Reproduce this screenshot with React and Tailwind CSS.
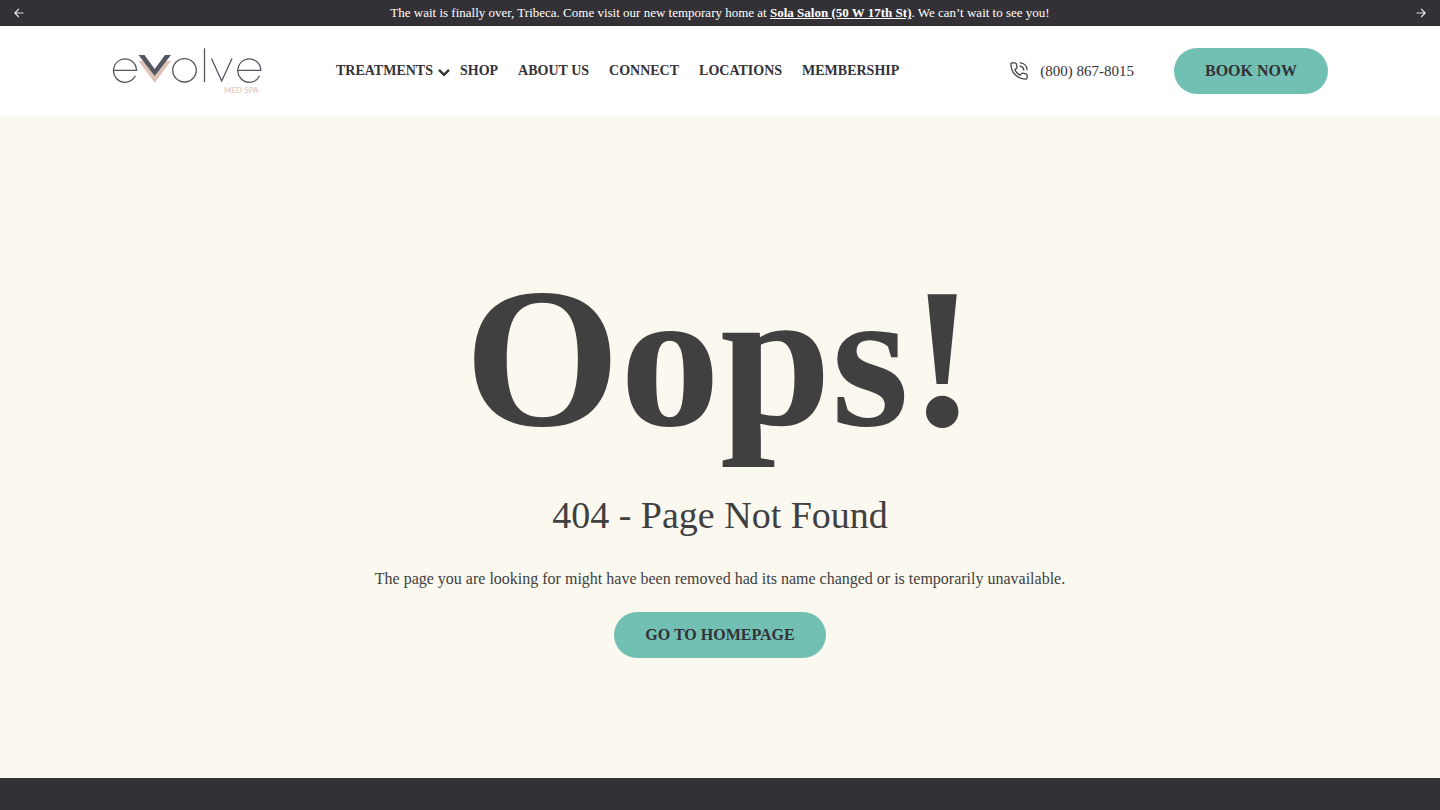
import React from 'react';

const navItems = ['Shop', 'About Us', 'Connect', 'Locations', 'Membership'];

const Logo = () => (
  <svg width="150" height="46" viewBox="0 0 150 46" fill="none" role="img" aria-label="Evolve Med Spa">
    <g stroke="#55575e" strokeWidth="1.3">
      <path d="M1.5 22.3H24.5A11.5 11.7 0 1 0 23.3 27.8" />
      <ellipse cx="72.5" cy="22.3" rx="11.8" ry="11.7" />
      <path d="M92.5 0.3V34.3" />
      <path d="M99.5 10.5L109.7 33L120 10.5" />
      <path d="M125.8 22.3H148.8A11.5 11.7 0 1 0 147.6 27.8" />
    </g>
    <path d="M26.5 13H32L42.5 27.5L53.5 13H59L42.7 34.8Z" fill="#dec2b6" />
    <path d="M26.5 7H32.5L42.7 21L53 7H59L42.7 28Z" fill="#545660" />
    <text x="112" y="45" fill="#dec2b6" fontSize="8" className="font-['Lato','Open_Sans',sans-serif]">
      MED SPA
    </text>
  </svg>
);

const PhoneIcon = () => (
  <svg width="18" height="18" viewBox="0 0 20 20" fill="none" stroke="#414042" strokeWidth="1.4" strokeLinecap="round" strokeLinejoin="round" aria-hidden="true">
    <path d="M2.2 1H5.2C6.4 1 6.9 1.4 7.1 2.2L7.8 5.6C7.9 6.3 7.7 6.8 7.2 7.2L5.4 8.6C6.6 11 8.6 13.2 11.2 14.6L12.8 12.9C13.3 12.4 13.8 12.2 14.5 12.4L17.8 13.1C18.7 13.3 19 13.8 19 14.8V17.6C19 18.6 18.5 19 17.6 19C8.4 19 1 11.6 1 2.4C1 1.5 1.4 1 2.2 1Z" />
    <path d="M11.5 1C15.6 1.3 18.7 4.4 19 8.5" />
    <path d="M11.2 4.7C13.4 5 15 6.6 15.3 8.8" />
  </svg>
);

const Arrow = ({ flip }) => (
  <svg width="10" height="10" viewBox="0 0 10 10" fill="none" stroke="#e4e4e4" strokeWidth="1.2" className={flip ? 'rotate-180' : ''} aria-hidden="true">
    <path d="M0.5 5H9M5.2 1L9.2 5L5.2 9" />
  </svg>
);

const PillLink = ({ children }) => (
  <a href="#" className="flex h-[46px] items-center rounded-full bg-[#71c0b3] px-[31px] text-base font-bold uppercase text-[#333136] hover:opacity-90">
    {children}
  </a>
);

const AnnouncementBar = () => (
  <div className="flex h-[26px] items-center justify-between bg-[#333136] px-[14px] text-[13px] text-white">
    <button type="button" aria-label="Previous announcement">
      <Arrow flip />
    </button>
    <p>
      The wait is finally over, Tribeca. Come visit our new temporary home at{' '}
      <a href="#" className="font-bold underline">Sola Salon (50 W 17th St)</a>. We can’t wait to see you!
    </p>
    <button type="button" aria-label="Next announcement">
      <Arrow />
    </button>
  </div>
);

const Header = () => (
  <header className="flex h-[90px] items-center bg-white px-28">
    <a href="#" className="shrink-0">
      <Logo />
    </a>
    <nav className="ml-[74px] flex items-center gap-5 whitespace-nowrap text-sm font-bold uppercase">
      <button type="button" className="-mr-[10px] flex items-center gap-1 font-bold uppercase">
        Treatments
        <svg width="13" height="9" viewBox="0 0 13 9" fill="none" stroke="currentColor" strokeWidth="2.4" className="mt-0.5" aria-hidden="true">
          <path d="M2 1.8L7 6.8L12 1.8" />
        </svg>
      </button>
      {navItems.map((item) => (
        <a key={item} href="#">{item}</a>
      ))}
    </nav>
    <div className="ml-auto flex items-center gap-10 whitespace-nowrap">
      <a href="tel:8008678015" className="flex items-center gap-3 text-[15px]">
        <PhoneIcon />
        (800) 867-8015
      </a>
      <PillLink>Book Now</PillLink>
    </div>
  </header>
);

const App = () => (
  <div className="flex min-h-screen flex-col bg-[#fbf8f0] font-['Liberation_Serif',serif] text-[#333136]">
    <AnnouncementBar />
    <Header />
    <main className="flex flex-1 flex-col items-center px-6 py-[120px] text-center text-[#404040]">
      <h1 className="text-[200px] leading-[244px] font-bold">Oops!</h1>
      <h2 className="mt-[15px] text-[38px] leading-10">404 - Page Not Found</h2>
      <p className="mt-8 mb-[21px] text-base">
        The page you are looking for might have been removed had its name changed or is temporarily unavailable.
      </p>
      <PillLink>Go to Homepage</PillLink>
    </main>
    <footer className="h-8 bg-[#333136]" />
  </div>
);

export default App;
